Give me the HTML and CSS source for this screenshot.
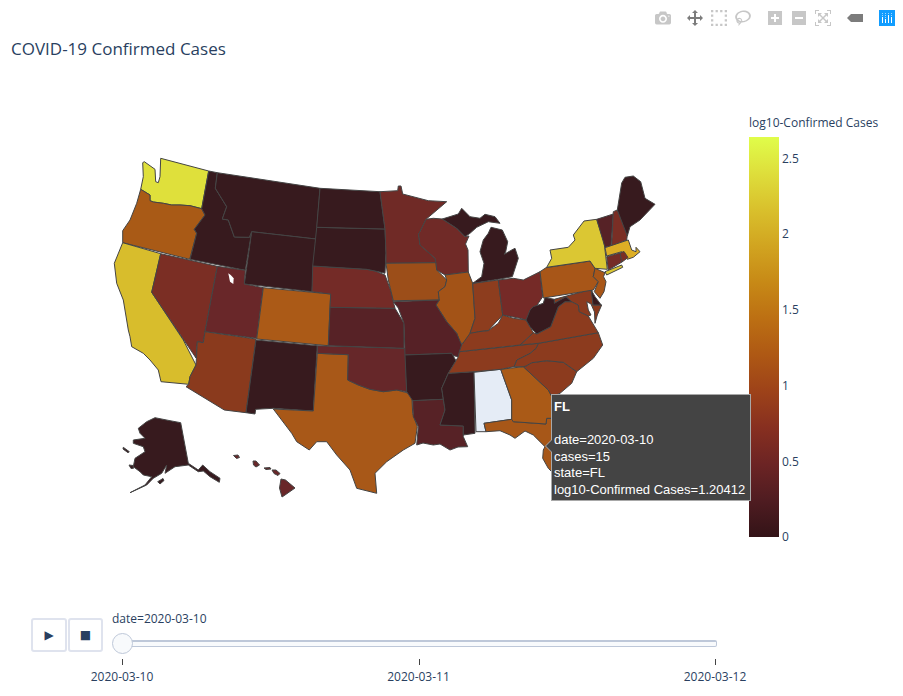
FILE: index.html
```html
<!DOCTYPE html>
<html lang="en">
<head>
<meta charset="utf-8">
<title>COVID-19 Confirmed Cases</title>
<link rel="stylesheet" href="styles.css">
</head>
<body>
<div class="chart">
  <div class="modebar">
    <div class="group">
      <span class="btn"><svg viewBox="0 0 1000 1000"><path class="idle" transform="matrix(1 0 0 -1 0 850)" d="m500 450c-83 0-150-67-150-150 0-83 67-150 150-150 83 0 150 67 150 150 0 83-67 150-150 150z m400 150h-120c-16 0-34 13-39 29l-31 93c-6 15-23 28-40 28h-340c-16 0-34-13-39-28l-31-94c-6-15-23-28-40-28h-120c-55 0-100-45-100-100v-450c0-55 45-100 100-100h800c55 0 100 45 100 100v450c0 55-45 100-100 100z m-400-550c-138 0-250 112-250 250 0 138 112 250 250 250 138 0 250-112 250-250 0-138-112-250-250-250z m365 380c-19 0-35 16-35 35 0 19 16 35 35 35 19 0 35-16 35-35 0-19-16-35-35-35z"/></svg></span>
    </div>
    <div class="group">
      <span class="btn"><svg viewBox="0 0 1000 1000"><path class="active" transform="matrix(1 0 0 -1 0 850)" d="m1000 350l-187 188 0-125-250 0 0 250 125 0-188 187-187-187 125 0 0-250-250 0 0 125-188-188 186-187 0 125 252 0 0-250-125 0 187-188 188 188-125 0 0 250 250 0 0-126 187 188z"/></svg></span>
      <span class="btn"><svg viewBox="0 0 1000 1000"><path class="idle" transform="matrix(1 0 0 -1 0 850)" d="m0 850l0-143 143 0 0 143-143 0z m286 0l0-143 143 0 0 143-143 0z m285 0l0-143 143 0 0 143-143 0z m286 0l0-143 143 0 0 143-143 0z m-857-286l0-143 143 0 0 143-143 0z m857 0l0-143 143 0 0 143-143 0z m-857-285l0-143 143 0 0 143-143 0z m857 0l0-143 143 0 0 143-143 0z m-857-286l0-143 143 0 0 143-143 0z m286 0l0-143 143 0 0 143-143 0z m285 0l0-143 143 0 0 143-143 0z m286 0l0-143 143 0 0 143-143 0z"/></svg></span>
      <span class="btn"><svg viewBox="0 0 1031 1000"><path class="idle" transform="matrix(1 0 0 -1 0 850)" d="m1018 538c-36 207-290 336-568 286-277-48-473-256-436-463 10-57 36-108 76-151-13-66 11-137 68-183 34-28 75-41 114-42l-55-70 0 0c-2-1-3-2-4-3-10-14-8-34 5-45 14-11 34-8 45 4 1 1 2 3 2 5l0 0 113 140c16 11 31 24 45 40 4 3 6 7 8 11 48-3 100 0 151 9 278 48 473 255 436 462z m-624-379c-80 14-149 48-197 96 42 42 109 47 156 9 33-26 47-66 41-105z m-187-74c-19 16-33 37-39 60 50-32 109-55 174-68-42-25-95-24-135 8z m360 75c-34-7-69-9-102-8 8 62-16 128-68 170-73 59-175 54-244-5-9 20-16 40-20 61-28 159 121 317 333 354s407-60 434-217c28-159-121-318-333-355z"/></svg></span>
    </div>
    <div class="group">
      <span class="btn"><svg viewBox="0 0 875 1000"><path class="idle" transform="matrix(1 0 0 -1 0 850)" d="m1 787l0-875 875 0 0 875-875 0z m687-500l-187 0 0-187-125 0 0 187-188 0 0 125 188 0 0 187 125 0 0-187 187 0 0-125z"/></svg></span>
      <span class="btn"><svg viewBox="0 0 875 1000"><path class="idle" transform="matrix(1 0 0 -1 0 850)" d="m0 788l0-876 875 0 0 876-875 0z m688-500l-500 0 0 125 500 0 0-125z"/></svg></span>
      <span class="btn"><svg viewBox="0 0 1000 1000"><path class="idle" transform="matrix(1 0 0 -1 0 850)" d="m250 850l-187 0-63 0 0-62 0-188 63 0 0 188 187 0 0 62z m688 0l-188 0 0-62 188 0 0-188 62 0 0 188 0 62-62 0z m-875-938l0 188-63 0 0-188 0-62 63 0 187 0 0 62-187 0z m875 188l0-188-188 0 0-62 188 0 62 0 0 62 0 188-62 0z m-125 188l-1 0-93-94-156 156 156 156 92-93 2 0 0 250-250 0 0-2 93-92-156-156-156 156 94 92 0 2-250 0 0-250 0 0 93 93 157-156-157-156-93 94 0 0 0-250 250 0 0 0-94 93 156 157 156-157-93-93 0 0 250 0 0 250z"/></svg></span>
    </div>
    <div class="group">
      <span class="btn"><svg viewBox="0 0 1500 1000"><path class="active" transform="matrix(1 0 0 -1 0 850)" d="m375 725l0 0-375-375 375-374 0-1 1125 0 0 750-1125 0z"/></svg></span>
    </div>
    <div class="group">
      <span class="btn"><svg viewBox="0 0 16 16">
        <rect class="logo-bg" width="16" height="16"/>
        <rect class="logo-bar" x="3" y="7" width="1" height="6"/>
        <rect class="logo-bar" x="6" y="9" width="1" height="4"/>
        <rect class="logo-bar" x="9" y="5" width="1" height="8"/>
        <rect class="logo-bar" x="12" y="7" width="1" height="6"/>
        <rect class="logo-dot" x="3" y="3" width="1" height="1"/>
        <rect class="logo-dot" x="3" y="5" width="1" height="1"/>
        <rect class="logo-dot" x="6" y="3" width="1" height="1"/>
        <rect class="logo-dot" x="6" y="5" width="1" height="1"/>
        <rect class="logo-dot" x="6" y="7" width="1" height="1"/>
        <rect class="logo-dot" x="9" y="3" width="1" height="1"/>
        <rect class="logo-dot" x="12" y="3" width="1" height="1"/>
        <rect class="logo-dot" x="12" y="5" width="1" height="1"/>
      </svg></span>
    </div>
  </div>

  <h1 class="title">COVID-19 Confirmed Cases</h1>

  <div class="plot">
    <svg class="map" viewBox="100 140 649 397" width="649" height="397">
      <g class="states">
        <path class="s-wa" d="M142.7,162.7 L144.3,161.7 L155,169.3 L155.7,181.7 L158.3,182.7 L160,176.7 L160.7,158.3 L208.7,171 L201.7,208.7 L190,205.7 L180,205 L171.7,205 L163.3,203.3 L153.3,202 L150,200.7 L150,195 L140.7,189.3 L143.3,176.7 Z"/>
        <path class="s-or" d="M140.7,189.3 L150,195 L150,200.7 L153.3,202 L163.3,203.3 L171.7,205 L180,205 L190,205.7 L201.7,208.7 L205,215 L194.3,229.3 L196.7,233.3 L189.7,259.3 L122.7,242.7 L122.7,230.7 L130,220 L136.7,203.3 Z"/>
        <path class="s-ca" d="M122.7,242.7 L160.7,253.7 L151.7,292.3 L183.3,340 L196,365 L190,376.7 L188.7,384.3 L161,381.7 L158.3,370 L150,360 L143.3,353.3 L131.7,346.7 L130,336.7 L128.3,330 L123.3,300 L116.7,283.3 L114.3,263.3 Z"/>
        <path class="s-nv" d="M160.7,253.7 L217.3,266.3 L205,331.7 L203.3,342.7 L197.3,341.7 L196,358 L151.7,292.3 Z"/>
        <path class="s-dark" d="M208.7,171 L217.3,172.7 L215.3,188.3 L226.7,206.7 L222.3,219 L228.3,220 L234.3,237 L249.3,237.3 L251.7,231.7 L245.3,270.3 L190,259.3 L196.7,233.3 L194.3,229.3 L205,215 L201.7,208.7 Z"/>
        <path class="s-dark" d="M217.3,172.7 L320,188.3 L316,239 L251.7,231.7 L249.3,237.3 L234.3,237 L228.3,220 L222.3,219 L226.7,206.7 L215.3,188.3 Z"/>
        <path class="s-dark" d="M251.7,231.7 L316,239 L312,291.7 L244.3,284 Z"/>
        <path class="s-ut" d="M217.3,266.3 L245.3,270.3 L244.3,284 L263.3,287.7 L256.7,338.3 L205,331.7 Z"/>
        <path class="s-lake" d="M228.3,273.3 L230.7,275 L233.7,278.3 L233.3,284 L230,281.7 Z"/>
        <path class="s-co" d="M263.3,287.7 L330.7,294 L328.3,345.7 L256.7,339 Z"/>
        <path class="s-az" d="M205,331.7 L256,339 L246,412.7 L224.3,410 L186,386.7 L188.7,384.3 L190,376.7 L196,365 L197.3,341.7 L203.3,342.7 Z"/>
        <path class="s-dark" d="M256,340 L317.3,345.7 L313.3,411 L273.3,408.3 L255.7,409.3 L255,414 L246,412.7 Z"/>
        <path class="s-tx" d="M317.3,353.3 L348.3,354.7 L347.7,380 L358.3,385 L370,389.3 L383.3,391.7 L396.7,390 L411.7,394 L412.7,413.3 L417.3,426.7 L415,443.3 L403.3,450 L386.7,461.7 L375,473.3 L376.7,493.3 L356.7,488.3 L350,470 L336.7,455 L326.7,441.7 L316.7,441.7 L309.3,450 L296.7,441.7 L291.7,433.3 L273.3,409 L313.3,411 Z"/>
        <path class="s-ok" d="M317.3,345.7 L405,348.3 L406.7,391.7 L396.7,390 L383.3,391.7 L370,389.3 L358.3,385 L347.7,380 L348.3,354.7 L317.3,353.3 Z"/>
        <path class="s-ks" d="M330,307.3 L395,308.3 L404,323.3 L404,348.3 L328.3,345.7 Z"/>
        <path class="s-ne" d="M312.7,266 L366.7,269.3 L375,271 L385,275 L391.7,293.3 L393.3,301.7 L395,308.3 L330,307.3 L330.7,294 L312,291.7 Z"/>
        <path class="s-dark" d="M316.7,227.3 L385,229 L386,253 L385,273.3 L375,271 L366.7,269.3 L312.7,266 Z"/>
        <path class="s-dark" d="M320,188.3 L380,191.7 L385,229 L316.7,227.3 Z"/>
        <path class="s-mn" d="M380,191.7 L397.7,190.7 L398.3,186 L401,186 L402.7,194 L428.3,200.7 L446.7,201.7 L426,219.3 L420,231.7 L418.5,234 L420,245 L435,258.3 L436,262.7 L386,263.3 L386,253 L385,229 Z"/>
        <path class="s-ia" d="M386,263.3 L436,262.7 L436.7,270 L446.7,280 L445,286.7 L438.3,291.7 L439.3,300 L393.3,300.7 L388.3,280 Z"/>
        <path class="s-wi" d="M426,219.3 L433.3,218.3 L442.3,219 L456.7,228.3 L465,236.7 L469,236 L465.5,244 L468,250 L468.3,272 L445,275 L436.7,270 L436,262.7 L435,258.3 L420,245 L418.5,234 L420,231.7 Z"/>
        <path class="s-il" d="M445,275 L468.3,272 L472.7,283.3 L475,318.3 L470,333.3 L466.7,343.3 L460,343.3 L456.7,333.3 L446.7,321.7 L436,305 L439.3,300 L438.3,291.7 L445,286.7 L446.7,280 Z"/>
        <path class="s-in" d="M472.7,283.3 L498.3,280 L502.7,315 L493.3,325 L488.3,330.7 L480,331.5 L471.7,333.3 L470,333.3 L475,318.3 Z"/>
        <path class="s-oh" d="M498.3,280 L513.3,278.3 L523.3,280 L540,271.7 L542.7,296.7 L535,308.3 L526,320 L520,318.3 L502.7,315 Z"/>
        <path class="s-dark" d="M491,227.3 L502.3,230 L507.7,241.7 L505.7,251.7 L504.3,254.3 L511.7,250 L515,248.3 L518.3,258.3 L512.3,276.7 L498.3,279.3 L472.7,283.3 L481.7,276.7 L484,263.3 L480,251.7 L483.3,240 L488.3,233.3 Z"/>
        <path class="s-dark" d="M442.3,219 L458.3,214 L461.7,208.3 L470,216.7 L480,218.3 L485,214.3 L495,216.7 L500,223.3 L488.3,221.7 L476.7,227.3 L470,233.3 L465,236.7 L456.7,228.3 Z"/>
        <path class="s-mo" d="M393.3,301.7 L439.3,300 L436,305 L446.7,321.7 L456.7,333.3 L461.7,345 L458.3,356.7 L450,355 L451.7,353.3 L405,355 L404,323.3 L398.3,308 Z"/>
        <path class="s-dark" d="M405,355 L451.7,353.3 L456,360.7 L448.3,373.3 L441.7,388.3 L443.3,399.3 L412.7,400.7 L406.7,391.7 Z"/>
        <path class="s-la" d="M412.7,400.7 L443.3,399.3 L445,410 L440,425 L463.3,426 L463.3,436.7 L467.7,446.7 L458,447 L450,450 L440,444 L433.3,445 L423,443 L416.7,445 L418.3,426.7 L413.3,416.7 Z"/>
        <path class="s-dark" d="M448.3,373.3 L474,371.7 L475,433.3 L463.3,435 L463.3,426 L440,425 L445,410 L441.7,388.3 Z"/>
        <path class="s-al" d="M474,372.3 L500.7,369.3 L511.7,400 L511.7,419.3 L484,423.3 L486,431.7 L476,431.7 Z"/>
        <path class="s-fl" d="M484,423.3 L511.7,419.3 L513.3,421.7 L546,424 L546.7,418.3 L553,418.3 L575,450 L560,480 L548.3,468.3 L542.7,458.3 L543.3,450 L545,446.7 L533.3,435 L525,431 L515,438.3 L510,435 L500,430.7 L486,431.7 Z"/>
        <path class="s-ga" d="M500.7,369.3 L523.3,366.7 L548.3,390 L553,397 L553,418.3 L546.7,418.3 L546,424 L513.3,421.7 L511.7,419.3 L511.7,400 Z"/>
        <path class="s-mid" d="M523.3,366.7 L526,366 L531.7,362.7 L546.7,360.7 L563.3,362.3 L576.7,371.7 L571.7,383.3 L560,393.3 L551.7,396.7 L548.3,390 Z"/>
        <path class="s-mid" d="M514,366.7 L516.7,360 L530,353.3 L536,348.3 L538.3,343.3 L598.3,332.7 L602.7,345 L593.3,358.3 L576.7,371.7 L563.3,362.3 L546.7,360.7 L531.7,362.7 L526,366 L523.3,366.7 Z"/>
        <path class="s-mid" d="M456,360.7 L458.3,356.7 L459.3,351.7 L538.3,343.3 L536,348.3 L530,353.3 L516.7,360 L514,366.7 L500.7,369.3 L474,371.7 L448.3,373.3 Z"/>
        <path class="s-mid" d="M520,345 L533.3,332.7 L536.7,334 L550.7,326.7 L558.3,306.7 L565,301.7 L571.7,301.7 L578.3,305 L579.3,311.7 L588.3,316 L598.3,332.7 L538.3,343.3 Z"/>
        <path class="s-mid" d="M459.3,351.7 L461.7,345 L470,333.3 L480,331.5 L488.3,330.7 L498.3,323.3 L502.7,315 L513.3,318.3 L526,320 L530,326.7 L533.3,332.7 L520,345 Z"/>
        <path class="s-md" d="M554.3,299.3 L591.7,289.3 L593,305 L601.7,305 L597.3,315 L595,323.3 L594.5,312 L591,304 L586.7,301.7 L588.3,310 L591,315 L588.3,316 L579.3,311.7 L578.3,305 L571.7,301.7 L566,296.7 L554.3,303.3 Z"/>
        <path class="s-dark" d="M526,320 L530,310 L533.3,306.7 L543.3,303.3 L545,297.5 L554.3,299.3 L554.3,303.3 L566,296.7 L571.7,301.7 L565,301.7 L558.3,306.7 L550.7,326.7 L536.7,334 L530,326.7 Z"/>
        <path class="s-pa" d="M540,271.7 L546,267.7 L590,261 L595,268.3 L593.3,276.7 L598.3,281.7 L593.3,290 L543.3,298 Z"/>
        <path class="s-pa" d="M595,268.3 L605,272.7 L603.5,276.7 L606,281.7 L604,291.7 L600,298.3 L594.3,291.7 L598.3,281.7 L593.3,276.7 Z"/>
        <path class="s-dark" d="M591.2,290 L595,296.7 L601.2,305 L593,305 Z"/>
        <path class="s-ny" d="M546.7,267.3 L551.7,258.3 L550,250 L568.3,247.3 L575,240 L573.3,235 L584,221 L596.7,219.3 L604,241.7 L607.3,269.3 L595,268.3 L590,261 Z"/>
        <path class="s-ny" d="M605,271.7 L621.7,265 L622.7,267.3 L606.7,275 Z"/>
        <path class="s-vt" d="M596.7,219.3 L613.3,214 L611,246 L605,247.3 Z"/>
        <path class="s-nh" d="M613.3,211.7 L617.3,210 L627.3,235 L626.7,240 L611.7,246 Z"/>
        <path class="s-dark" d="M617.3,210 L621.7,183 L625,177.3 L633.3,176 L640.7,181.7 L645,198.3 L655,204.3 L640,220 L630,226.7 L627.3,236 Z"/>
        <path class="s-ma" d="M605,247.7 L625,241 L628.3,240 L631.7,250 L636,251.7 L636,247.3 L640,251.7 L633.3,257.3 L627.3,259.3 L621.7,251.7 L606.7,256 Z"/>
        <path class="s-ct" d="M606.7,256.7 L620,253 L622,262 L608.3,270 Z"/>
        <path class="s-nv" d="M620,253 L624,251.5 L628,257.5 L622,262 Z"/>
        <path class="s-dark" d="M138.3,428.3 L146.7,421.7 L155,417.7 L170,420.7 L180.7,422.7 L188.3,463.3 L198.3,470 L202.7,465 L210,471.7 L220,478.3 L219.3,482.3 L210,476.7 L203.3,471 L198.3,471.7 L188.3,465 L175,466.7 L165,473.3 L166.7,465 L161.7,473.3 L153.3,478.3 L146.7,485 L130,492.7 L145,485 L151.7,476.7 L143.3,475 L140,471.7 L133.3,466.7 L135,458.3 L145,451.7 L143.3,446.7 L133.3,443.3 L133.3,440 L145,438.3 L140,433.3 Z"/>
        <path class="s-dark" d="M123.3,447.3 L129.3,451.7 L128,452.7 L123,449 Z"/>
        <path class="s-dark" d="M129,465 L133,465.5 L133.5,468.3 L131,468.5 Z"/>
        <path class="s-dark" d="M157.7,481.7 L163,478.5 L164,480.5 L160,484 Z"/>
        <path class="s-ut" d="M233.5,455.5 L238,455 L239.5,457.5 L236.5,458.5 Z"/>
        <path class="s-ut" d="M253,461 L256,461 L259.5,465 L256,467 L253.5,465 Z"/>
        <path class="s-ut" d="M264,468 L270,467.5 L271,469 L266,469.5 Z"/>
        <path class="s-ut" d="M272,470 L276,470 L280,473.5 L278,475.5 L274,473.5 Z"/>
        <path class="s-ut" d="M281,479 L285.5,480 L295,488 L285,495 L282,497 L279.5,488 Z"/>
      </g>
    </svg>
    <div class="colorbar">
      <div class="cb-title">log10-Confirmed Cases</div>
      <div class="cb-body">
        <div class="cb-ramp"></div>
        <div class="cb-ticks">
          <span>2.5</span><span>2</span><span>1.5</span><span>1</span><span>0.5</span><span>0</span>
        </div>
      </div>
    </div>
  </div>

  <div class="anim">
    <div class="controls">
      <button class="ctl" type="button">▶</button>
      <button class="ctl" type="button">■</button>
    </div>
    <div class="slider">
      <div class="slider-label">date=2020-03-10</div>
      <div class="rail-wrap">
        <div class="rail"></div>
        <div class="thumb"></div>
      </div>
      <div class="ticks">
        <div class="tick">2020-03-10</div>
        <div class="tick">2020-03-11</div>
        <div class="tick">2020-03-12</div>
      </div>
    </div>
  </div>

  <div class="tooltip">
    <div class="tip-head">FL</div>
    <div class="tip-line">&nbsp;</div>
    <div class="tip-line">date=2020-03-10</div>
    <div class="tip-line">cases=15</div>
    <div class="tip-line">state=FL</div>
    <div class="tip-line">log10-Confirmed Cases=1.20412</div>
  </div>
</div>
</body>
</html>
```

FILE: styles.css
```css
html, body {
  margin: 0;
  padding: 0;
  background: #fff;
}

.chart {
  position: relative;
  width: 903px;
  height: 696px;
  overflow: hidden;
  font-family: "Open Sans", sans-serif;
  color: #2a3f5f;
}

/* toolbar */
.modebar {
  display: flex;
  justify-content: flex-end;
  height: 26px;
  padding: 10px 4px 0 0;
  box-sizing: content-box;
}
.group {
  display: flex;
  margin-left: 8px;
}
.btn {
  display: block;
  width: 16px;
  height: 16px;
  padding: 0 4px;
}
.btn svg {
  display: block;
  width: 16px;
  height: 16px;
}
.idle { fill: rgba(68, 68, 68, 0.3); }
.active { fill: rgba(68, 68, 68, 0.7); }
.logo-bg { fill: #119dff; }
.logo-bar { fill: #fff; }
.logo-dot { fill: #9fd8ff; }

/* title */
.title {
  margin: 0;
  padding-left: 11px;
  height: 77px;
  font-size: 17px;
  font-weight: 400;
  line-height: 26px;
}

/* plot */
.plot {
  display: flex;
  height: 424px;
}
.map {
  display: block;
  flex: none;
  margin: 27px 0 0 100px;
}
.colorbar {
  flex: none;
  width: 154px;
}
.cb-title {
  height: 24px;
  font-size: 12px;
  line-height: 20px;
}
.cb-body {
  display: flex;
  height: 400px;
}
.cb-ramp {
  flex: none;
  width: 30px;
  height: 400px;
  background: linear-gradient(to top,
    rgb(51, 19, 23) 0%,
    rgb(79, 28, 33) 9.09%,
    rgb(108, 36, 36) 18.18%,
    rgb(135, 47, 32) 27.27%,
    rgb(157, 66, 25) 36.36%,
    rgb(174, 88, 20) 45.45%,
    rgb(188, 111, 19) 54.55%,
    rgb(199, 137, 22) 63.64%,
    rgb(209, 164, 32) 72.73%,
    rgb(217, 192, 44) 81.82%,
    rgb(222, 222, 59) 90.91%,
    rgb(224, 253, 74) 100%);
}
.cb-ticks {
  display: flex;
  flex-direction: column;
  justify-content: space-between;
  height: 395px;
  margin: 13.5px 0 0 3px;
  font-size: 12px;
  line-height: 16px;
  color: #2a3f5f;
}

/* state fills */
.states path {
  stroke: #444;
  stroke-width: 1;
  stroke-linejoin: round;
}
.s-dark { fill: #371a1e; }
.s-wa { fill: #dfe03b; }
.s-or { fill: #a95a16; }
.s-ca { fill: #d8bd2c; }
.s-nv { fill: #7b2e24; }
.s-ut { fill: #692729; }
.s-co { fill: #ab5a17; }
.s-az { fill: #8a3a1d; }
.s-tx { fill: #a85818; }
.s-ok { fill: #662729; }
.s-ks { fill: #572226; }
.s-ne { fill: #742b27; }
.s-mn { fill: #702a26; }
.s-ia { fill: #9c4e19; }
.s-wi { fill: #702a27; }
.s-il { fill: #a35317; }
.s-in { fill: #8d3d1e; }
.s-oh { fill: #752a27; }
.s-mo { fill: #562126; }
.s-la { fill: #572226; }
.s-al { fill: #e5ecf6; }
.s-ga { fill: #aa5a17; }
.s-fl { fill: #a75718; }
.s-mid { fill: #8c3b1e; }
.s-md { fill: #8a3a1e; }
.s-pa { fill: #a85618; }
.s-ny { fill: #dbc733; }
.s-vt { fill: #562226; }
.s-nh { fill: #7a2e25; }
.s-ma { fill: #ddae25; }
.s-ct { fill: #752b27; }
.states .s-lake { fill: #fff; stroke: none; }

/* animation controls */
.anim {
  display: flex;
  align-items: flex-start;
  padding: 74px 0 0 31px;
}
.controls {
  display: flex;
  gap: 1px;
  margin-top: 7px;
}
.ctl {
  display: flex;
  align-items: center;
  justify-content: center;
  width: 36px;
  height: 34px;
  padding: 0;
  background: #fff;
  border: 2px solid #dfe3ee;
  border-radius: 3px;
  color: #2a3f5f;
  font-family: "DejaVu Sans", sans-serif;
  font-size: 12px;
}
.ctl + .ctl { width: 35px; }
.slider {
  width: 615px;
  margin-left: 9px;
}
.slider-label {
  height: 16px;
  font-size: 12px;
  line-height: 16px;
  margin-bottom: 6px;
}
.rail-wrap {
  position: relative;
  height: 21px;
  margin-left: 10px;
}
.rail {
  position: absolute;
  left: 0;
  right: 10px;
  top: 7px;
  height: 7px;
  box-sizing: border-box;
  background: #f8fafc;
  border: 1px solid #bec8d9;
  border-top-width: 2px;
  border-radius: 2px;
}
.thumb {
  position: absolute;
  left: -10px;
  top: 0;
  width: 21px;
  height: 21px;
  box-sizing: border-box;
  background: #f8fafc;
  border: 1px solid #bec8d9;
  border-radius: 50%;
}
.ticks {
  display: flex;
  justify-content: space-between;
  width: 657px;
  margin: 5px 0 0 -22px;
}
.tick {
  position: relative;
  width: 64px;
  padding-top: 10px;
  font-size: 12px;
  line-height: 16px;
  text-align: center;
  white-space: nowrap;
  color: #2a3f5f;
}
.tick::before {
  content: "";
  position: absolute;
  left: 32px;
  top: 0;
  width: 1px;
  height: 6px;
  background: #444;
}

/* hover label */
.tooltip {
  position: absolute;
  left: 551px;
  top: 394px;
  box-sizing: border-box;
  width: 200px;
  height: 107px;
  padding: 3.5px 0 0 2px;
  background: #444;
  border: 1px solid #a8a8a8;
  color: #fff;
  font-family: "Liberation Sans", Arial, sans-serif;
  font-size: 13px;
  line-height: 16.7px;
  white-space: nowrap;
}
.tip-head { font-weight: 700; }
.tooltip::before,
.tooltip::after {
  content: "";
  position: absolute;
  top: 45px;
  width: 0;
  height: 0;
  border-style: solid;
  border-color: transparent;
}
.tooltip::before {
  left: -7px;
  border-width: 6px 6px 6px 0;
  border-right-color: #a8a8a8;
}
.tooltip::after {
  left: -6px;
  border-width: 6px 6px 6px 0;
  border-right-color: #444;
}
```
